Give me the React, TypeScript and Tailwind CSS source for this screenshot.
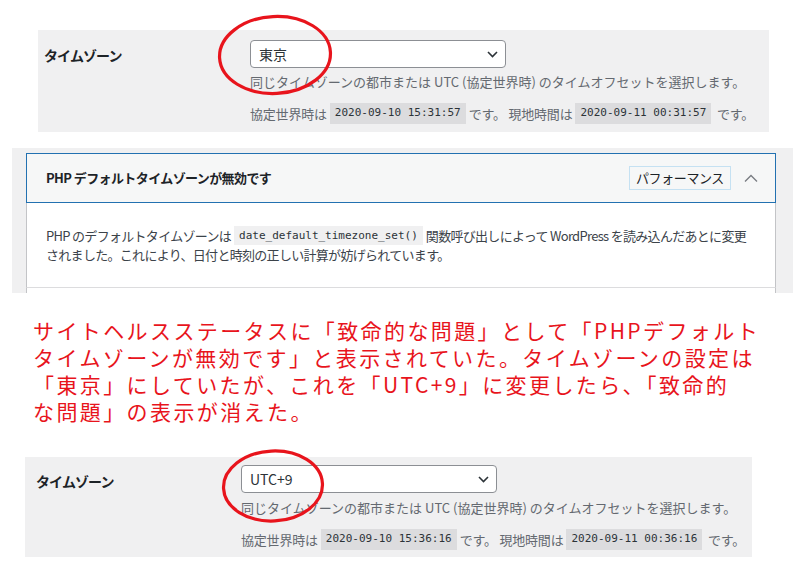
import React from "react";

const jp = { fontFamily: '"Noto Sans CJK JP", "Noto Sans", sans-serif' };
const mono = { fontFamily: '"DejaVu Sans Mono", "Liberation Mono", monospace' };

function Code({ children }: { children: React.ReactNode }) {
    return (
        <code
            style={mono}
            className="inline-flex items-center h-[21px] px-[5px] mx-[3px] bg-[#dcdcde] text-[11px] tracking-normal text-[#2c3338]"
        >
            {children}
        </code>
    );
}

function SelectBox({ value }: { value: string }) {
    return (
        <div className="w-[256px] h-[28px] border border-[#8c8f94] rounded-[4px] bg-white flex items-center justify-between pl-[8px] pr-[7px]">
            <span className="text-[14px] text-[#2c3338]">{value}</span>
            <svg width="11" height="7" viewBox="0 0 11 7">
                <path d="M1 1l4.5 4.5L10 1" fill="none" stroke="#2c3338" strokeWidth="1.6"/>
            </svg>
        </div>
    );
}

function TimezoneRow({ value, utc, local, labelWidth, labelPad, labelTop, selectTop, descGap }: {
    value: string;
    utc: string;
    local: string;
    labelWidth: string;
    labelPad: string;
    labelTop: string;
    selectTop: string;
    descGap: string;
}) {
    return (
        <>
            <div className={`${labelWidth} ${labelPad} ${labelTop} shrink-0 text-[14px] leading-[18px] font-bold tracking-[-0.9px] text-[#1d2327]`}>
                タイムゾーン
            </div>
            <div className={selectTop}>
                <SelectBox value={value}/>
                <p className={`${descGap} text-[13px] leading-[18px] tracking-[0px] text-[#646970] whitespace-nowrap`}>
                    同じタイムゾーンの都市または UTC (協定世界時) のタイムオフセットを選択します。
                </p>
                <div className="mt-[12px] h-[21px] flex items-center text-[13px] tracking-[-0.2px] text-[#646970] whitespace-nowrap">
                    <span>協定世界時は</span>
                    <Code>{utc}</Code>
                    <span>です。 現地時間は</span>
                    <Code>{local}</Code>
                    <span>&nbsp;です。</span>
                </div>
            </div>
        </>
    );
}

export default function App() {
    return (
        <div style={jp} className="relative w-[807px] h-[583px] bg-white overflow-hidden">
            {/* before: 東京 */}
            <div className="ml-[38px] pt-[30px]">
                <div className="w-[731px] h-[102px] bg-[#f0f0f1] flex">
                    <TimezoneRow
                        value="東京"
                        utc="2020-09-10 15:31:57"
                        local="2020-09-11 00:31:57"
                        labelWidth="w-[212px]"
                        labelPad="pl-[6px]"
                        labelTop="pt-[16px]"
                        selectTop="pt-[10px]"
                        descGap="mt-[5px]"
                    />
                </div>
            </div>

            {/* site health item */}
            <div className="mt-[16px] ml-[12px] w-[781px] h-[145px] bg-[#f0f0f1] pt-[5px] pl-[14px] pr-[17px]">
                <div className="h-[50px] border border-[#2271b1] bg-[#f6f7f7] flex items-center justify-between pl-[19px] pr-[17px]">
                    <span className="text-[13px] font-semibold tracking-[-0.6px] text-[#1d2327]">
                        PHP デフォルトタイムゾーンが無効です
                    </span>
                    <div className="flex items-center gap-[13px]">
                        <span className="h-[24px] w-[102px] flex items-center justify-center border border-[#c5e1f2] text-[13px] tracking-[-0.4px] text-[#1d2327]">
                            パフォーマンス
                        </span>
                        <svg width="14" height="8" viewBox="0 0 14 8">
                            <path d="M1 7.5L7 1.5l6 6" fill="none" stroke="#787c82" strokeWidth="1.3"/>
                        </svg>
                    </div>
                </div>
                <div className="h-[84px] bg-white border-x border-[#c3c4c7] pt-[23px] pl-[19px] text-[13px] leading-[19px] tracking-[-0.7px] text-[#3c434a] whitespace-nowrap">
                    <div className="flex items-center">
                        <span>PHP のデフォルトタイムゾーンは</span>
                        <code style={mono} className="inline-flex items-center h-[19px] px-[5px] mx-[3px] bg-[#f0f0f1] text-[11px] tracking-normal text-[#2c3338]">
                            date_default_timezone_set()
                        </code>
                        <span>関数呼び出しによって WordPress を読み込んだあとに変更</span>
                    </div>
                    <div>されました。これにより、日付と時刻の正しい計算が妨げられています。</div>
                </div>
                <div className="h-[6px] bg-white border-x border-t border-[#dcdcde] border-l-[#c3c4c7] border-r-[#c3c4c7]"></div>
            </div>

            {/* note */}
            <div className="mt-[24px] ml-[33px] text-[21px] leading-[27px] tracking-[2.4px] text-[#e8141c] whitespace-nowrap">
                <div className="h-[27px]">サイトヘルスステータスに「致命的な問題」として「PHPデフォルト</div>
                <div className="h-[27px]">タイムゾーンが無効です」と表示されていた。タイムゾーンの設定は</div>
                <div className="h-[27px]">「東京」にしていたが、これを「UTC+9」に変更したら、「致命的</div>
                <div className="h-[27px]">な問題」の表示が消えた。</div>
            </div>

            {/* after: UTC+9 */}
            <div className="mt-[32px] ml-[25px] w-[727px] h-[100px] bg-[#f0f0f1] flex">
                <TimezoneRow
                    value="UTC+9"
                    utc="2020-09-10 15:36:16"
                    local="2020-09-11 00:36:16"
                    labelWidth="w-[216px]"
                    labelPad="pl-[11px]"
                    labelTop="pt-[15px]"
                    selectTop="pt-[8px]"
                    descGap="mt-[6px]"
                />
            </div>

            {/* red circles */}
            <svg className="absolute left-[216px] top-[14px]" width="118" height="82" viewBox="0 0 118 82">
                <ellipse cx="59" cy="41" rx="55.5" ry="38.5" fill="none" stroke="#e8141c" strokeWidth="3.2" transform="rotate(-3 59 41)"/>
            </svg>
            <svg className="absolute left-[221px] top-[449px]" width="104" height="74" viewBox="0 0 104 74">
                <ellipse cx="52" cy="37" rx="49.5" ry="35" fill="none" stroke="#e8141c" strokeWidth="3.2" transform="rotate(-3 52 37)"/>
            </svg>
        </div>
    );
}
